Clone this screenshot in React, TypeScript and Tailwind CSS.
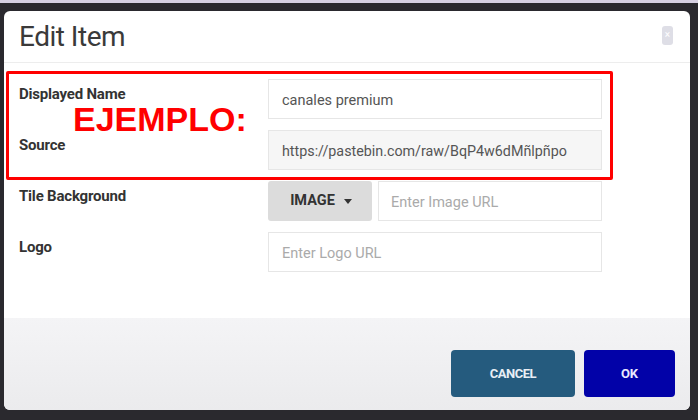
import React from "react";

const font = { fontFamily: "Roboto, 'Open Sans', Arial, sans-serif" };

function Field({ label, children }: { label: string; children: React.ReactNode }) {
  return (
    <div className="flex h-[40px]">
      <div className="w-[249px] pt-[5px] text-[15px] font-bold leading-[20px] tracking-[-0.2px] text-[#333]">{label}</div>
      <div className="flex w-[334px]">{children}</div>
    </div>
  );
}

export default function App() {
  return (
    <div
      className="relative w-[698px] h-[420px] overflow-hidden bg-[#2a292e] border-t-[3px] border-[#d6d0e2] pt-[8px] pl-[4px] pr-[8px] pb-[10px]"
      style={font}
    >
      <div className="flex h-[399px] w-[686px] flex-col overflow-hidden rounded-[6px] bg-white">
        <div className="flex h-[52px] shrink-0 items-center justify-between border-b border-[#ededed] pl-[15px] pr-[17px]">
          <div className="text-[28px] font-normal tracking-[-0.5px] text-[#3a3a3a] leading-none pt-[1px]">Edit Item</div>
          <div className="mb-[3px] flex h-[19px] w-[11px] items-center justify-center rounded-[3px] bg-[#dedee6] text-[10px] leading-none text-white">×</div>
        </div>
        <div className="flex flex-1 flex-col gap-[11px] pl-[15px] pt-[16px]">
          <Field label="Displayed Name">
            <div className="flex h-[40px] w-full items-center border border-[#e6e6e6] bg-white pl-[13px] pt-[3px] text-[14.5px] text-[#555]">canales premium</div>
          </Field>
          <Field label="Source">
            <div className="flex h-[40px] w-full items-center border border-[#e6e6e6] bg-[#f6f6f6] pl-[13px] pt-[3px] text-[14.3px] text-[#555]">https://pastebin.com/raw/BqP4w6dMñlpñpo</div>
          </Field>
          <Field label="Tile Background">
            <div className="flex h-[40px] w-[104px] shrink-0 items-center justify-center gap-[9px] rounded-[3px] bg-[#dcdcdc] pl-[2px] text-[14.5px] font-bold text-[#333]">
              IMAGE
              <svg width="8" height="5" viewBox="0 0 8 5"><path d="M0 0h8L4 5z" fill="#333" /></svg>
            </div>
            <div className="ml-[6px] flex h-[40px] flex-1 items-center border border-[#e6e6e6] bg-white pl-[12px] pt-[3px] text-[14.5px] text-[#aaa]">Enter Image URL</div>
          </Field>
          <Field label="Logo">
            <div className="flex h-[40px] w-full items-center border border-[#e6e6e6] bg-white pl-[13px] pt-[3px] text-[14.5px] text-[#aaa]">Enter Logo URL</div>
          </Field>
        </div>
        <div className="flex h-[92px] shrink-0 items-start justify-end gap-[9px] bg-gradient-to-b from-[#f4f4f6] to-[#ebebed] pr-[15px] pt-[32px]">
          <button className="h-[47px] w-[124px] rounded-[4px] bg-[#255b7e] text-[13px] font-bold tracking-[-0.5px] text-[#e8eef5]">CANCEL</button>
          <button className="h-[47px] w-[91px] rounded-[4px] bg-[#0202a8] text-[13px] font-bold text-[#e8e8ff]">OK</button>
        </div>
      </div>
      <div className="absolute left-[6px] top-[68px] h-[109px] w-[607px] rounded-[2px] border-[3px] border-[#ff0000]" />
      <div
        className="absolute left-[73px] top-[99px] text-[34px] font-bold leading-none text-[#ff0000]"
        style={{ fontFamily: "'Liberation Sans', Arial, sans-serif" }}
      >
        EJEMPLO:
      </div>
    </div>
  );
}
